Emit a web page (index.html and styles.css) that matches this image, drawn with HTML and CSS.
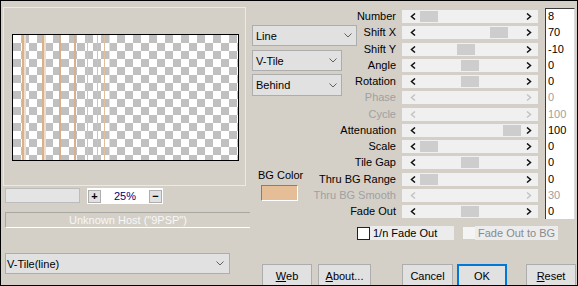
FILE: index.html
```html
<!DOCTYPE html>
<html lang="en">
<head>
    <meta charset="UTF-8">
    <title>V-Tile</title>
    <link rel="stylesheet" href="styles.css">
</head>
<body>
    <div class="dialog">
        <div class="left">
            <div class="group">
                <div class="preview">
                    <div class="stroke" style="left: 9px;"></div>
                    <div class="stroke pale" style="left: 11px;"></div>
                    <div class="stroke" style="left: 29px;"></div>
                    <div class="stroke pale" style="left: 31px;"></div>
                    <div class="stroke" style="left: 46px;"></div>
                    <div class="stroke" style="left: 61px;"></div>
                    <div class="stroke thin" style="left: 74px;"></div>
                    <div class="stroke thin" style="left: 84px;"></div>
                    <div class="stroke thin" style="left: 91px;"></div>
                    <div class="stroke thin pale" style="left: 96px;"></div>
                </div>
            </div>
            <div class="zoom-row">
                <div class="zoom-field"></div>
                <div class="zoom-box">
                    <span class="zbtn">+</span>
                    <span class="zval">25%</span>
                    <span class="zbtn">&minus;</span>
                </div>
            </div>
            <div class="status">Unknown Host ("9PSP")</div>
            <div class="select wide">
                <span>V-Tile(line)</span>
                <svg width="8" height="5" viewBox="0 0 8 5"><path d="M0.5 0.5L4 4L7.5 0.5" fill="none" stroke="#606060"/></svg>
            </div>
        </div>
        <div class="main">
            <div class="top">
                <div class="mid">
                    <div class="select sel-line">
                        <span>Line</span>
                        <svg width="8" height="5" viewBox="0 0 8 5"><path d="M0.5 0.5L4 4L7.5 0.5" fill="none" stroke="#606060"/></svg>
                    </div>
                    <div class="select sel-short">
                        <span>V-Tile</span>
                        <svg width="8" height="5" viewBox="0 0 8 5"><path d="M0.5 0.5L4 4L7.5 0.5" fill="none" stroke="#606060"/></svg>
                    </div>
                    <div class="select sel-short sel-behind">
                        <span>Behind</span>
                        <svg width="8" height="5" viewBox="0 0 8 5"><path d="M0.5 0.5L4 4L7.5 0.5" fill="none" stroke="#606060"/></svg>
                    </div>
                    <div class="bg-label">BG Color</div>
                    <div class="swatch"></div>
                </div>
                <div class="params" id="params"></div>
            </div>
            <div class="checks">
                <span class="cbox"></span>
                <span class="clabel">1/n Fade Out</span>
                <span class="cbox off"></span>
                <span class="clabel off">Fade Out to BG</span>
            </div>
            <div class="buttons">
                <div class="btn b-web"><u>W</u>eb</div>
                <div class="btn b-about"><u>A</u>bout...</div>
                <div class="btn b-cancel">Cancel</div>
                <div class="btn b-ok">OK</div>
                <div class="btn b-reset"><u>R</u>eset</div>
            </div>
        </div>
    </div>
    <script>
        // thumb = left offset of the slider thumb, null when disabled
        const params = [
            {name: 'Number', thumb: 18, value: '8'},
            {name: 'Shift X', thumb: 88, value: '70'},
            {name: 'Shift Y', thumb: 55, value: '-10'},
            {name: 'Angle', thumb: 59, value: '0'},
            {name: 'Rotation', thumb: 59, value: '0'},
            {name: 'Phase', thumb: null, value: '0'},
            {name: 'Cycle', thumb: null, value: '100'},
            {name: 'Attenuation', thumb: 101, value: '100'},
            {name: 'Scale', thumb: 18, value: '0'},
            {name: 'Tile Gap', thumb: 59, value: '0'},
            {name: 'Thru BG Range', thumb: 18, value: '0'},
            {name: 'Thru BG Smooth', thumb: null, value: '30'},
            {name: 'Fade Out', thumb: 59, value: '0'}
        ];

        const left = '<svg width="6" height="7" viewBox="0 0 6 7"><path d="M5 0.5L1.5 3.5L5 6.5" fill="none" stroke="currentColor" stroke-width="1.5"/></svg>';
        const right = '<svg width="6" height="7" viewBox="0 0 6 7"><path d="M1 0.5L4.5 3.5L1 6.5" fill="none" stroke="currentColor" stroke-width="1.5"/></svg>';

        const box = document.getElementById('params');
        for (let i = 0; i < params.length; i++) {
            const p = params[i];
            const off = p.thumb === null ? ' off' : '';

            box.appendChild(createElement('div', 'lbl' + off, p.name));

            const slider = createElement('div', 'slider' + off);
            slider.innerHTML = left + right;
            if (p.thumb !== null) {
                const thumb = createElement('div', 'thumb');
                thumb.style.left = p.thumb + 'px';
                slider.appendChild(thumb);
            }
            box.appendChild(slider);

            box.appendChild(createElement('div', 'val' + off + (i === 0 ? ' first' : ''), p.value));
        }

        function createElement(tagName, className, innerText) {
            const element = document.createElement(tagName);
            element.className = className;
            if(innerText) {
                element.innerText = innerText;
            }
            return element;
        }
    </script>
</body>
</html>
```

FILE: styles.css
```css
* {
    margin: 0;
    padding: 0;
    box-sizing: border-box;
}
body {
    font-family: "Liberation Sans", Arial, sans-serif;
    font-size: 11px;
    color: #000;
}
.dialog {
    width: 578px;
    height: 286px;
    border: 1px solid #000;
    background: #d4d0c8;
    display: flex;
    overflow: hidden;
}

/* left column */
.left {
    width: 249px;
    flex: none;
}
.group {
    margin: 6px 0 0 2px;
    width: 243px;
    height: 179px;
    border: 1px solid #ebe9e4;
    padding: 26px 0 0 8px;
}
.preview {
    position: relative;
    width: 227px;
    height: 127px;
    border: 1px solid #000;
    background: repeating-conic-gradient(#c0c0c0 0 25%, #fff 0 50%) 0 0 / 16px 16px;
}
.stroke {
    position: absolute;
    top: 0;
    bottom: 0;
    width: 2px;
    background: #d6b18c;
}
.stroke.thin {
    width: 1px;
    background: #e2bf9c;
}
.stroke.pale {
    background: #f1dcc7;
}
.zoom-row {
    display: flex;
    margin: 2px 0 0 4px;
}
.zoom-field {
    width: 75px;
    height: 15px;
    background: #e4e4e4;
    border: 1px solid #bcbcbc;
}
.zoom-box {
    margin-left: 7px;
    width: 76px;
    height: 16px;
    background: #fff;
    display: flex;
    align-items: center;
    padding: 0 1px;
}
.zbtn {
    width: 13px;
    height: 13px;
    background: #e1e1e1;
    border: 1px solid #adadad;
    font-weight: bold;
    line-height: 11px;
    text-align: center;
}
.zval {
    flex: 1;
    text-align: center;
    color: #00007b;
}
.status {
    margin: 8px 0 0 4px;
    height: 16px;
    border-top: 1px solid #a9a7a2;
    border-left: 1px solid #a9a7a2;
    border-bottom: 1px solid #fff;
    color: #f7f7f7;
    text-align: center;
    line-height: 14px;
}
.select {
    height: 21px;
    background: #e1e1e1;
    border: 1px solid #adadad;
    display: flex;
    align-items: center;
    justify-content: space-between;
    padding: 0 4px 0 3px;
}
.select.wide {
    margin: 25px 0 0 4px;
    width: 225px;
    padding-left: 1px;
    padding-right: 5px;
}

/* right side */
.main {
    flex: 1;
    display: flex;
    flex-direction: column;
}
.top {
    display: flex;
    height: 218px;
}
.mid {
    width: 106px;
    flex: none;
    padding: 24px 0 0 2px;
}
.sel-line {
    width: 105px;
}
.sel-short {
    width: 90px;
    margin-top: 4px;
}
.sel-behind {
    margin-top: 3px;
    height: 22px;
}
.bg-label {
    margin: 73px 0 0 6px;
    line-height: 13px;
}
.swatch {
    margin: 3px 0 0 9px;
    width: 37px;
    height: 16px;
    background: #e5bd96;
    border: 1px solid;
    border-color: #808080 #fff #fff #808080;
}
.params {
    flex: 1;
    display: grid;
    grid-template-columns: 46px 136px 37px;
    grid-auto-rows: 16.25px;
    padding-top: 7px;
    align-content: start;
}
.lbl {
    display: flex;
    justify-content: flex-end;
    padding-right: 6px;
    white-space: nowrap;
    line-height: 16px;
}
.lbl.off, .val.off {
    color: #a0a0a0;
}
.slider {
    position: relative;
    margin-top: 2px;
    height: 13px;
    background: #f0f0f0;
    display: flex;
    align-items: center;
    justify-content: space-between;
    padding: 0 6px 0 8px;
    color: #111;
}
.slider.off {
    color: #c4c4c4;
}
.slider svg {
    display: block;
}
.thumb {
    position: absolute;
    top: 1px;
    width: 18px;
    height: 11px;
    background: #cdcdcd;
}
.val {
    margin-left: 7px;
    background: #fff;
    border-left: 1px solid #3c3c3c;
    border-right: 1px solid #dcdcdc;
    padding-left: 2px;
    line-height: 16px;
}
.val.first {
    border-top: 1px solid #3c3c3c;
    line-height: 15px;
}

.checks {
    display: flex;
    align-items: center;
    margin-top: 7px;
    padding-left: 107px;
    height: 14px;
}
.cbox {
    width: 13px;
    height: 13px;
    border: 1px solid #222;
    background: #fff;
}
.cbox.off {
    margin-left: 9px;
    width: 12px;
    height: 12px;
    border: none;
    background: #f4f4f4;
}
.clabel {
    width: 84px;
    height: 14px;
    line-height: 14px;
    padding-left: 3px;
    background: #ececec;
}
.clabel.off {
    width: 83px;
    color: #8a8a8a;
}

.buttons {
    display: flex;
    margin-top: 24px;
    padding-left: 12px;
}
.btn {
    flex: none;
    height: 23px;
    background: #e1e1e1;
    border: 1px solid #adadad;
    display: flex;
    align-items: center;
    justify-content: center;
}
.b-web {
    width: 50px;
}
.b-about {
    width: 53px;
    margin-left: 6px;
}
.b-cancel {
    width: 51px;
    margin-left: 31px;
}
.b-ok {
    width: 50px;
    margin-left: 4px;
    border: 2px solid #0078d7;
}
.b-reset {
    width: 50px;
    margin-left: 19px;
}
```
